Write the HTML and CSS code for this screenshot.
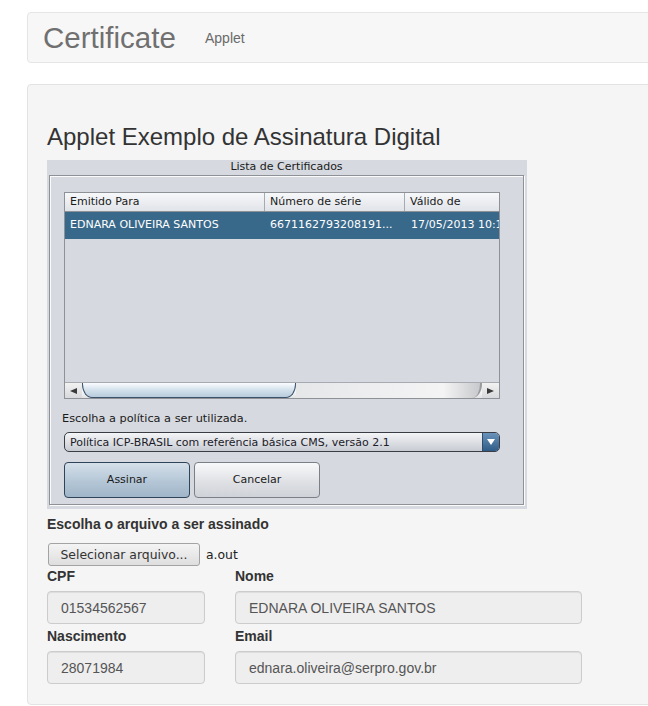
FILE: index.html
```html
<!DOCTYPE html>
<html lang="pt">
<head>
<meta charset="utf-8">
<title>Certificate Applet</title>
<link rel="stylesheet" href="styles.css">
</head>
<body>
<div class="page">
  <header class="hero">
    <h1 class="brand">Certificate <small>Applet</small></h1>
  </header>
  <main class="well">
    <h2 class="title">Applet Exemplo de Assinatura Digital</h2>
    <div class="applet">
      <div class="legend">Lista de Certificados</div>
      <div class="frame">
        <div class="scrollpane">
          <div class="thead">
            <div class="th c1">Emitido Para</div>
            <div class="th c2">Número de série</div>
            <div class="th c3">Válido de</div>
          </div>
          <div class="trow">
            <div class="td c1">EDNARA OLIVEIRA SANTOS</div>
            <div class="td c2">6671162793208191...</div>
            <div class="td c3">17/05/2013 10:11</div>
          </div>
          <div class="viewport"></div>
          <div class="hscroll">
            <div class="sbtn left"><span class="tri-left"></span></div>
            <div class="track">
              <div class="thumb"></div>
              <div class="track-end"></div>
            </div>
            <div class="sbtn right"><span class="tri-right"></span></div>
          </div>
        </div>
        <div class="jlabel">Escolha a política a ser utilizada.</div>
        <div class="combo">
          <span class="combo-text">Política ICP-BRASIL com referência básica CMS, versão 2.1</span>
          <span class="combo-arrow"><span class="tri-down"></span></span>
        </div>
        <div class="jbuttons">
          <div class="jbtn default">Assinar</div>
          <div class="jbtn">Cancelar</div>
        </div>
      </div>
    </div>

    <div class="form">
      <div class="label file-label">Escolha o arquivo a ser assinado</div>
      <div class="file-row">
        <span class="file-btn">Selecionar arquivo...</span>
        <span class="file-name">a.out</span>
      </div>
      <div class="fields">
        <div class="field">
          <div class="label">CPF</div>
          <div class="input">01534562567</div>
        </div>
        <div class="field">
          <div class="label">Nome</div>
          <div class="input">EDNARA OLIVEIRA SANTOS</div>
        </div>
        <div class="field">
          <div class="label">Nascimento</div>
          <div class="input">28071984</div>
        </div>
        <div class="field">
          <div class="label">Email</div>
          <div class="input">ednara.oliveira@serpro.gov.br</div>
        </div>
      </div>
    </div>
  </main>
</div>
</body>
</html>
```

FILE: styles.css
```css
html, body {
  margin: 0;
  padding: 0;
  background: #fff;
  overflow: hidden;
  font-family: "Liberation Sans", Arial, sans-serif;
  color: #333;
}

.page {
  padding: 12px 0 0 27px;
}

.hero {
  height: 49px;
  margin-right: -20px;
  background: #f7f7f7;
  border: 1px solid #e5e5e5;
  border-radius: 4px;
  display: flex;
  align-items: center;
}

.brand {
  margin: 0 0 0 15px;
  font-weight: normal;
  font-size: 29.5px;
  line-height: 34px;
  color: #707070;
  padding-top: 6px;
}

.brand small {
  font-size: 14px;
  color: #6a6a6a;
  margin-left: 21px;
  position: relative;
  top: -5px;
}

.well {
  margin-top: 21px;
  margin-right: -20px;
  background: #f5f5f5;
  border: 1px solid #e3e3e3;
  border-radius: 4px;
  padding: 38px 0 20px 19px;
}

.title {
  margin: 0;
  font-weight: normal;
  font-size: 24px;
  line-height: 28px;
  color: #333;
}

/* ---------- Java applet (Nimbus look) ---------- */
.applet {
  margin-top: 9px;
  width: 480px;
  height: 349px;
  box-sizing: border-box;
  background: #d6d9df;
  padding: 0 3px 4px 2px;
  font-family: "DejaVu Sans", sans-serif;
  font-size: 11px;
  color: #000;
  display: flex;
  flex-direction: column;
}

.legend {
  height: 15px;
  line-height: 14px;
  text-align: center;
  color: #1a1a1a;
}

.frame {
  flex: 1;
  border: 1px solid #8e9196;
  box-shadow: inset 1px 1px 0 #fbfbfc, 1px 1px 0 #fbfbfc;
  padding: 16px 0 0 14px;
}

.scrollpane {
  width: 434px;
  border: 1px solid #8e9196;
  background: #d6d9df;
  overflow: hidden;
}

.thead {
  display: flex;
  height: 18px;
  background: linear-gradient(#f7f8fa, #e0e3e8);
  border-bottom: 1px solid #8e9196;
}

.th, .td {
  box-sizing: border-box;
  white-space: nowrap;
  overflow: hidden;
  padding-left: 5px;
  flex: none;
}

.th {
  line-height: 18px;
  color: #1a1a1a;
  border-right: 1px solid #a7aab0;
}

.c1 { width: 200px; }
.c2 { width: 140px; }
.c3 { width: 110px; border-right: 0; }

.trow {
  display: flex;
  height: 27px;
  line-height: 26px;
  background: #39698a;
  color: #fff;
}

.trow .c3 { padding-left: 6px; }

.viewport {
  height: 143px;
}

.hscroll {
  display: flex;
  height: 15px;
  border-top: 1px solid #a7aab0;
  background: linear-gradient(#f2f2f3, #d8d9dc);
}

.sbtn {
  width: 17px;
  flex: none;
  display: flex;
  align-items: center;
  justify-content: center;
}

.tri-left {
  width: 0; height: 0;
  border-top: 3px solid transparent;
  border-bottom: 3px solid transparent;
  border-right: 7px solid #3a3a3a;
}

.tri-right {
  width: 0; height: 0;
  border-top: 3px solid transparent;
  border-bottom: 3px solid transparent;
  border-left: 7px solid #3a3a3a;
}

.track {
  flex: 1;
  display: flex;
  background: linear-gradient(#e6e7e9, #f6f6f7 60%, #e2e3e5);
}

.thumb {
  width: 214px;
  box-sizing: border-box;
  border: 1px solid #3b536b;
  border-top: 0;
  border-radius: 0 0 10px 10px / 0 0 14px 14px;
  background: linear-gradient(#fbfdff, #d3e1ec 50%, #b8cbdb);
}

.track-end {
  flex: 1;
  border-radius: 0 0 10px 0 / 0 0 14px 0;
  border-right: 2px solid #9a9b9e;
  background: linear-gradient(90deg, #e6e7e9, #f4f4f5 80%, #c8c9cc);
}

.jlabel {
  margin-top: 13px;
  margin-left: -2px;
  line-height: 14px;
  font-size: 11.3px;
  color: #1a1a1a;
}

.combo {
  margin-top: 6px;
  width: 436px;
  height: 20px;
  box-sizing: border-box;
  border: 1px solid #3a3d44;
  border-radius: 5px;
  background: linear-gradient(#f4f5f7, #c7cbd2);
  display: flex;
  align-items: center;
  overflow: hidden;
}

.combo-text {
  flex: 1;
  padding-left: 5px;
  color: #1c1b2a;
}

.combo-arrow {
  width: 16px;
  height: 100%;
  border-left: 1px solid #2d4d6b;
  background: linear-gradient(#6a93bb, #2f5c87);
  display: flex;
  align-items: center;
  justify-content: center;
}

.tri-down {
  width: 0; height: 0;
  border-left: 4px solid transparent;
  border-right: 4px solid transparent;
  border-top: 6px solid #fff;
}

.jbuttons {
  margin-top: 10px;
  display: flex;
  gap: 4px;
}

.jbtn {
  width: 126px;
  height: 36px;
  box-sizing: border-box;
  border: 1px solid #7c7f86;
  border-radius: 4px;
  background: linear-gradient(#f8f9fa, #dfe1e5 55%, #cfd2d8);
  text-align: center;
  line-height: 34px;
  color: #1a1a1a;
}

.jbtn.default {
  border-color: #2f4459;
  background: linear-gradient(#d5e0ea, #b4c6d6 55%, #a0b5c8);
}

/* ---------- HTML form ---------- */
.form {
  margin-top: 5px;
}

.label {
  font-weight: bold;
  font-size: 14px;
  line-height: 20px;
  color: #333;
}

.file-row {
  margin-top: 8px;
  display: flex;
  align-items: center;
  gap: 6px;
  height: 24px;
}

.file-btn {
  margin-left: 1px;
  box-sizing: border-box;
  width: 152px;
  height: 23px;
  line-height: 21px;
  border: 1px solid #a3a3a3;
  border-radius: 3px;
  background: linear-gradient(#f4f4f4, #dedede);
  font-family: "DejaVu Sans", sans-serif;
  font-size: 12.4px;
  color: #333;
  text-align: center;
}

.file-name {
  font-family: "DejaVu Sans", sans-serif;
  font-size: 12.4px;
  color: #222;
}

.fields {
  margin-top: 0;
  display: grid;
  grid-template-columns: 158px 347px;
  column-gap: 30px;
  row-gap: 2px;
}

.field .label {
  margin-bottom: 5px;
}

.input {
  box-sizing: border-box;
  height: 33px;
  padding: 6px 13px;
  line-height: 20px;
  font-size: 14px;
  color: #555;
  background: #eee;
  border: 1px solid #ccc;
  border-radius: 4px;
  box-shadow: inset 0 1px 1px rgba(0,0,0,0.075);
  white-space: nowrap;
  overflow: hidden;
}
```
